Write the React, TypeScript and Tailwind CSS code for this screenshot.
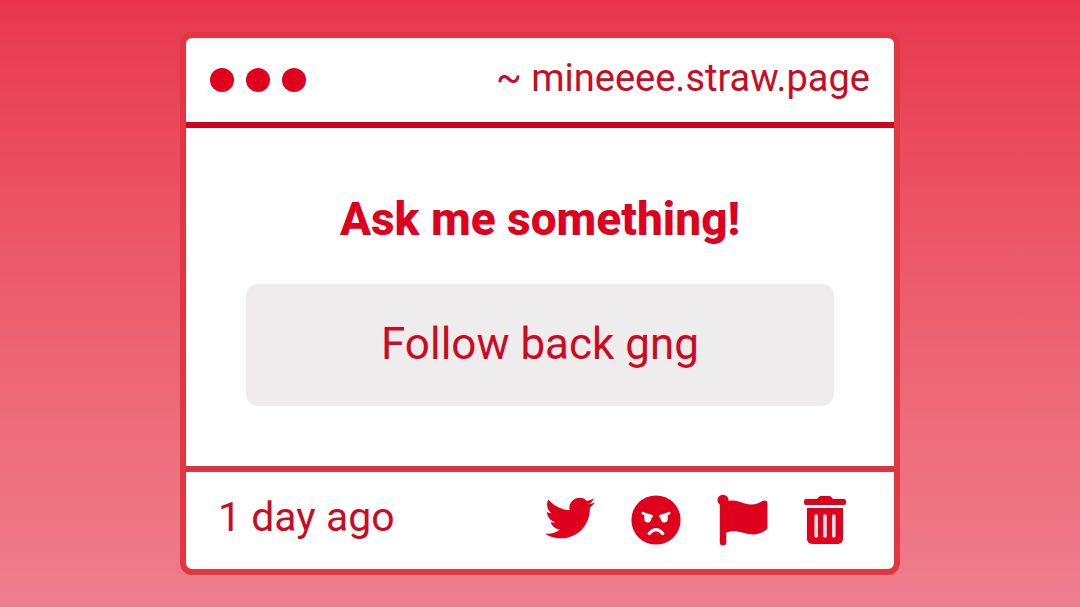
import type { ReactNode } from "react";
import { FaTwitter } from "react-icons/fa";

function AngryIcon() {
  return (
    <svg viewBox="0 0 50 50" className="size-[50px]" fill="currentColor" aria-hidden="true">
      <circle cx="25" cy="25" r="24.600" />
      <g fill="none" stroke="#fff" strokeLinecap="round">
        <path d="M11.800 18.200L20.800 21.200M38.200 18.200L29.200 21.200" strokeWidth="2.600" />
        <path d="M18.200 38.600Q25 30.600 31.800 38.600" strokeWidth="3.200" />
      </g>
      <path
        d="M13.200 19.500L20.600 21.800Q20.600 27.600 16.900 27.600Q13.200 27.600 13.200 23.500ZM36.800 19.500L29.400 21.800Q29.400 27.600 33.100 27.600Q36.800 27.600 36.800 23.500Z"
        fill="#fff"
      />
    </svg>
  );
}

function FlagIcon() {
  return (
    <svg viewBox="0 0 51 52" className="h-[52px] w-[51px]" fill="currentColor" aria-hidden="true">
      <circle cx="6" cy="6.200" r="5.500" />
      <path d="M2.800 6h6.400v42.300a3.200 3.200 0 0 1-6.400 0z" />
      <path d="M8 7.500C16 5 22 7.500 28 9.500C36 12 41 9.500 45 7.200C48.500 5.700 50.500 6.500 50.500 9.500V33C50.500 34.500 50 35.300 49 36C42 41.200 35 41.200 27 39C19 36.500 13 37 8 39z" />
    </svg>
  );
}

function TrashIcon() {
  return (
    <svg viewBox="0 0 42 48" className="h-12 w-[42px]" fill="currentColor" aria-hidden="true">
      <path d="M2 3H13L14.500 1.200Q15.500 0 17 0H25Q26.500 0 27.500 1.200L29 3H40A2 2 0 0 1 42 5V7A2 2 0 0 1 40 9H2A2 2 0 0 1 0 7V5A2 2 0 0 1 2 3Z" />
      <path d="M3 12H39V43A5 5 0 0 1 34 48H8A5 5 0 0 1 3 43Z" />
      <path
        d="M12.200 20V40M21 20V40M29.800 20V40"
        className="stroke-[#fbdfe3]"
        strokeWidth="3.600"
        strokeLinecap="round"
      />
    </svg>
  );
}

function IconButton({ label, children }: { label: string; children: ReactNode }) {
  return (
    <button type="button" aria-label={label} className="flex cursor-pointer items-center justify-center">
      {children}
    </button>
  );
}

export default function App() {
  return (
    <div className="flex min-h-screen items-center justify-center bg-linear-to-b from-[#e8364e] to-[#ef7e8e] font-[Roboto,sans-serif] text-[#df001d]">
      <main className="w-2/3 rounded-xl border-6 border-[#e23640] bg-white">
        <header className="flex items-center justify-between border-b-6 border-[#cf0320] px-6 py-3">
          <div className="flex gap-3">
            <span className="size-6 rounded-full bg-[#df001d]" />
            <span className="size-6 rounded-full bg-[#df001d]" />
            <span className="size-6 rounded-full bg-[#df001d]" />
          </div>
          <a href="#profile" className="pb-1 text-[38px] leading-[56px] text-[#cd0a22]">
            ~ mineeee.straw.page
          </a>
        </header>
        <section className="flex flex-col items-center px-[60px] py-[60px]">
          <h1 className="text-[46px] leading-[62px] font-extrabold">Ask me something!</h1>
          <p className="mt-[34px] w-full rounded-xl bg-[#eeecec] pt-[31px] pb-[33px] text-center text-[44px] leading-[58px] text-[#cd0a22]">
            Follow back gng
          </p>
        </section>
        <footer className="flex items-center justify-between border-t-6 border-[#dd3340] pt-[15px] pr-12 pb-[22px] pl-8">
          <time className="text-[41px] leading-[57px] text-[#cd0a22]">1 day ago</time>
          <div className="flex items-center gap-9 pt-1.5">
            <IconButton label="Share on Twitter">
              <FaTwitter className="mb-1 size-[50px]" />
            </IconButton>
            <IconButton label="Block sender">
              <AngryIcon />
            </IconButton>
            <IconButton label="Report">
              <FlagIcon />
            </IconButton>
            <IconButton label="Delete">
              <TrashIcon />
            </IconButton>
          </div>
        </footer>
      </main>
    </div>
  );
}
